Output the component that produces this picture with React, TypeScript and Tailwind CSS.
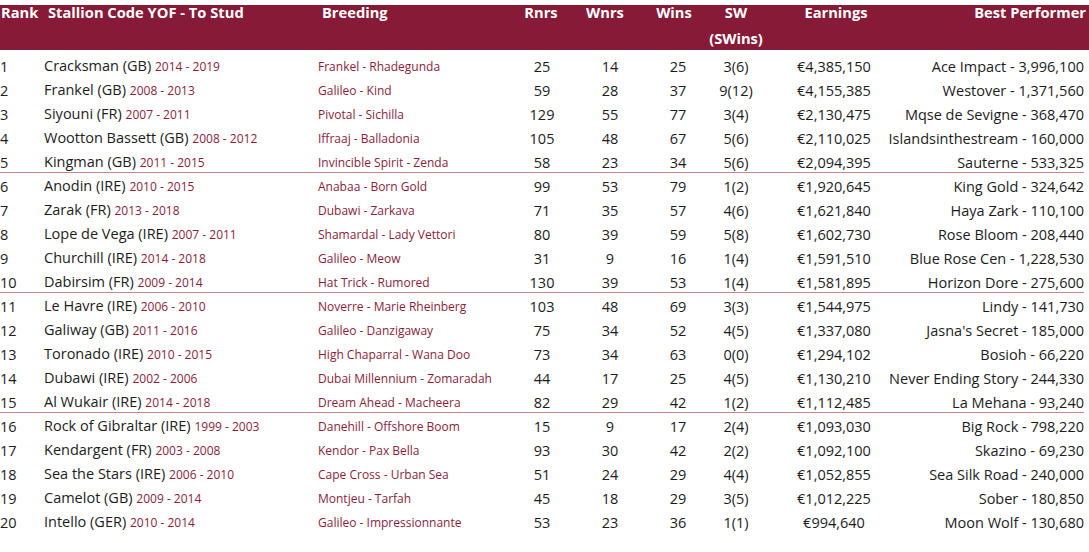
const rows = [
  ["1", "Cracksman (GB)", "2014 - 2019", "Frankel - Rhadegunda", "25", "14", "25", "3(6)", "€4,385,150", "Ace Impact - 3,996,100"],
  ["2", "Frankel (GB)", "2008 - 2013", "Galileo - Kind", "59", "28", "37", "9(12)", "€4,155,385", "Westover - 1,371,560"],
  ["3", "Siyouni (FR)", "2007 - 2011", "Pivotal - Sichilla", "129", "55", "77", "3(4)", "€2,130,475", "Mqse de Sevigne - 368,470"],
  ["4", "Wootton Bassett (GB)", "2008 - 2012", "Iffraaj - Balladonia", "105", "48", "67", "5(6)", "€2,110,025", "Islandsinthestream - 160,000"],
  ["5", "Kingman (GB)", "2011 - 2015", "Invincible Spirit - Zenda", "58", "23", "34", "5(6)", "€2,094,395", "Sauterne - 533,325"],
  ["6", "Anodin (IRE)", "2010 - 2015", "Anabaa - Born Gold", "99", "53", "79", "1(2)", "€1,920,645", "King Gold - 324,642"],
  ["7", "Zarak (FR)", "2013 - 2018", "Dubawi - Zarkava", "71", "35", "57", "4(6)", "€1,621,840", "Haya Zark - 110,100"],
  ["8", "Lope de Vega (IRE)", "2007 - 2011", "Shamardal - Lady Vettori", "80", "39", "59", "5(8)", "€1,602,730", "Rose Bloom - 208,440"],
  ["9", "Churchill (IRE)", "2014 - 2018", "Galileo - Meow", "31", "9", "16", "1(4)", "€1,591,510", "Blue Rose Cen - 1,228,530"],
  ["10", "Dabirsim (FR)", "2009 - 2014", "Hat Trick - Rumored", "130", "39", "53", "1(4)", "€1,581,895", "Horizon Dore - 275,600"],
  ["11", "Le Havre (IRE)", "2006 - 2010", "Noverre - Marie Rheinberg", "103", "48", "69", "3(3)", "€1,544,975", "Lindy - 141,730"],
  ["12", "Galiway (GB)", "2011 - 2016", "Galileo - Danzigaway", "75", "34", "52", "4(5)", "€1,337,080", "Jasna's Secret - 185,000"],
  ["13", "Toronado (IRE)", "2010 - 2015", "High Chaparral - Wana Doo", "73", "34", "63", "0(0)", "€1,294,102", "Bosioh - 66,220"],
  ["14", "Dubawi (IRE)", "2002 - 2006", "Dubai Millennium - Zomaradah", "44", "17", "25", "4(5)", "€1,130,210", "Never Ending Story - 244,330"],
  ["15", "Al Wukair (IRE)", "2014 - 2018", "Dream Ahead - Macheera", "82", "29", "42", "1(2)", "€1,112,485", "La Mehana - 93,240"],
  ["16", "Rock of Gibraltar (IRE)", "1999 - 2003", "Danehill - Offshore Boom", "15", "9", "17", "2(4)", "€1,093,030", "Big Rock - 798,220"],
  ["17", "Kendargent (FR)", "2003 - 2008", "Kendor - Pax Bella", "93", "30", "42", "2(2)", "€1,092,100", "Skazino - 69,230"],
  ["18", "Sea the Stars (IRE)", "2006 - 2010", "Cape Cross - Urban Sea", "51", "24", "29", "4(4)", "€1,052,855", "Sea Silk Road - 240,000"],
  ["19", "Camelot (GB)", "2009 - 2014", "Montjeu - Tarfah", "45", "18", "29", "3(5)", "€1,012,225", "Sober - 180,850"],
  ["20", "Intello (GER)", "2010 - 2014", "Galileo - Impressionnante", "53", "23", "36", "1(1)", "€994,640", "Moon Wolf - 130,680"],
];

const cols = "grid grid-cols-[44px_274px_190px_68px_68px_68px_48px_148px_176px]";

export default function App() {
  return (
    <div
      className="w-[1089px] h-[552px] bg-white pr-[5px] overflow-hidden"
      style={{ fontFamily: '"Open Sans", "Liberation Sans", sans-serif' }}
    >
      {/* header */}
      <div className={`${cols} mt-[5px] h-[45px] -mr-[5px] w-[1089px] bg-[#861a37] text-white text-[14.7px] font-bold leading-[14px] whitespace-nowrap`}>
        <div className="pl-px">Rank</div>
        <div className="pl-[4px]">Stallion Code YOF - To Stud</div>
        <div className="pl-[4px]">Breeding</div>
        <div className="flex justify-center pr-[2px]">Rnrs</div>
        <div className="flex justify-center pr-[10px]">Wnrs</div>
        <div className="flex justify-center pr-[8px]">Wins</div>
        <div className="flex flex-col items-center">
          <span>SW</span>
          <span className="mt-[12px]">(SWins)</span>
        </div>
        <div className="flex justify-center pl-[4px]">Earnings</div>
        <div className="flex justify-end -mr-[2px]">Best Performer</div>
      </div>

      {/* body */}
      <div className="pt-[4px]">
        {rows.map((r, i) => (
          <div key={r[0]}>
            <div className={`${cols} h-[24px] items-center leading-[24px] text-[14.5px] text-[#1c1c1c] whitespace-nowrap`}>
              <div>{r[0]}</div>
              <div>
                {r[1]} <span className="text-[12px] text-[#8a1d3d]">{r[2]}</span>
              </div>
              <div className="text-[12px] text-[#8a1d3d]">{r[3]}</div>
              <div className="flex justify-center">{r[4]}</div>
              <div className="flex justify-center">{r[5]}</div>
              <div className="flex justify-center">{r[6]}</div>
              <div className="flex justify-center">{r[7]}</div>
              <div className="flex justify-center">{r[8]}</div>
              <div className="flex justify-end">{r[9]}</div>
            </div>
            {(i === 4 || i === 9 || i === 14) && (
              <div className="h-px -mt-[2px] mb-[1px] bg-[#c88594]" />
            )}
          </div>
        ))}
      </div>
    </div>
  );
}
